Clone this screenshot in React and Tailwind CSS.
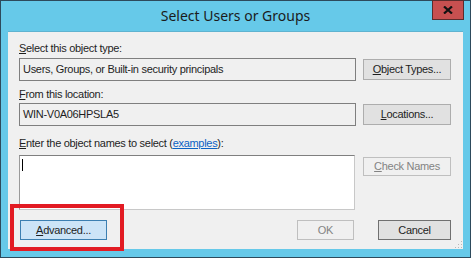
export default function App() {
  const font = { fontFamily: '"Liberation Sans", Arial, sans-serif' };
  return (
    <div className="w-[471px] h-[258px] bg-[#66c9e9] border border-[#2d4a5c] flex flex-col relative" style={font}>
      <div className="h-[30px] grid grid-cols-[1fr_auto_1fr] items-start">
        <div />
        <div className="pt-[4px] text-[14px] leading-[22px] text-[#1b1b1b]" style={{ fontFamily: '"Noto Sans", "Open Sans", sans-serif' }}>
          Select Users or Groups
        </div>
        <div className="flex justify-end pr-[6px]">
          <div className="w-[32px] h-[20px] -mt-[1px] bg-[#c75050] border border-[#5b2c2c] flex items-center justify-center">
            <svg width="10" height="8" viewBox="0 0 10 8">
              <path d="M1 0.5 L9 7.5 M9 0.5 L1 7.5" stroke="#111" strokeWidth="2.2" />
            </svg>
          </div>
        </div>
      </div>
      <div className="mx-[7px] mb-[8px] flex-1 bg-[#f0f0f0] border-t border-[#5fb3d0] pl-[11px] pr-[12px] pt-[10px] text-[11px] leading-[13px] tracking-[-0.3px] text-[#1e1e1e] flex flex-col">
        <div><span className="underline">S</span>elect this object type:</div>
        <div className="mt-[3px] flex items-center justify-between">
          <div className="w-[337px] h-[23px] border border-[#7f7f7f] bg-[#f0f0f0] flex items-center px-[3px]">
            Users, Groups, or Built-in security principals
          </div>
          <div className="w-[88px] h-[21px] border border-[#adadad] bg-[#e1e1e1] flex items-center justify-center">
            <span><span className="underline">O</span>bject Types...</span>
          </div>
        </div>
        <div className="mt-[7px]"><span className="underline">F</span>rom this location:</div>
        <div className="mt-[2px] flex items-center justify-between">
          <div className="w-[337px] h-[23px] border border-[#7f7f7f] bg-[#f0f0f0] flex items-center px-[3px]">
            WIN-V0A06HPSLA5
          </div>
          <div className="w-[88px] h-[21px] border border-[#adadad] bg-[#e1e1e1] flex items-center justify-center">
            <span><span className="underline">L</span>ocations...</span>
          </div>
        </div>
        <div className="mt-[11px]">
          <span className="underline">E</span>nter the object names to select (<span className="text-[#0b62c4] underline">examples</span>):
        </div>
        <div className="mt-[5px] flex items-start justify-between">
          <div className="w-[336px] h-[55px] bg-white border border-[#c8c8c8] border-t-[#7f7f7f] border-l-[#9a9a9a] pl-[2px] pt-[3px]">
            <div className="w-[1px] h-[12px] bg-black" />
          </div>
          <div className="mt-[2px] w-[88px] h-[19px] border border-[#bfbfbf] bg-[#f0f0f0] text-[#838383] flex items-center justify-center">
            <span><span className="underline">C</span>heck Names</span>
          </div>
        </div>
        <div className="mt-[10px] flex items-center">
          <div className="ml-[1px] w-[87px] h-[20px] border border-[#3c7fb1] bg-[#cce4f7] flex items-center justify-center">
            <span><span className="underline">A</span>dvanced...</span>
          </div>
          <div className="flex-1" />
          <div className="w-[57px] h-[20px] border border-[#bfbfbf] bg-[#f0f0f0] text-[#838383] flex items-center justify-center">OK</div>
          <div className="ml-[24px] w-[73px] h-[20px] border border-[#707070] bg-[#e1e1e1] flex items-center justify-center">Cancel</div>
        </div>
      </div>
      <svg className="absolute left-[454px] top-[240px]" width="8" height="8" viewBox="0 0 8 8">
        <rect x="6" y="0" width="1" height="1" fill="#b8b8b8" />
        <rect x="3" y="3" width="1" height="1" fill="#b8b8b8" />
        <rect x="6" y="3" width="1" height="1" fill="#b8b8b8" />
        <rect x="0" y="6" width="1" height="1" fill="#b8b8b8" />
        <rect x="3" y="6" width="1" height="1" fill="#b8b8b8" />
        <rect x="6" y="6" width="1" height="1" fill="#b8b8b8" />
      </svg>
      <div className="absolute left-[9px] top-[203px] w-[114px] h-[47px] border-[4px] border-[#e21b23]" />
    </div>
  );
}
